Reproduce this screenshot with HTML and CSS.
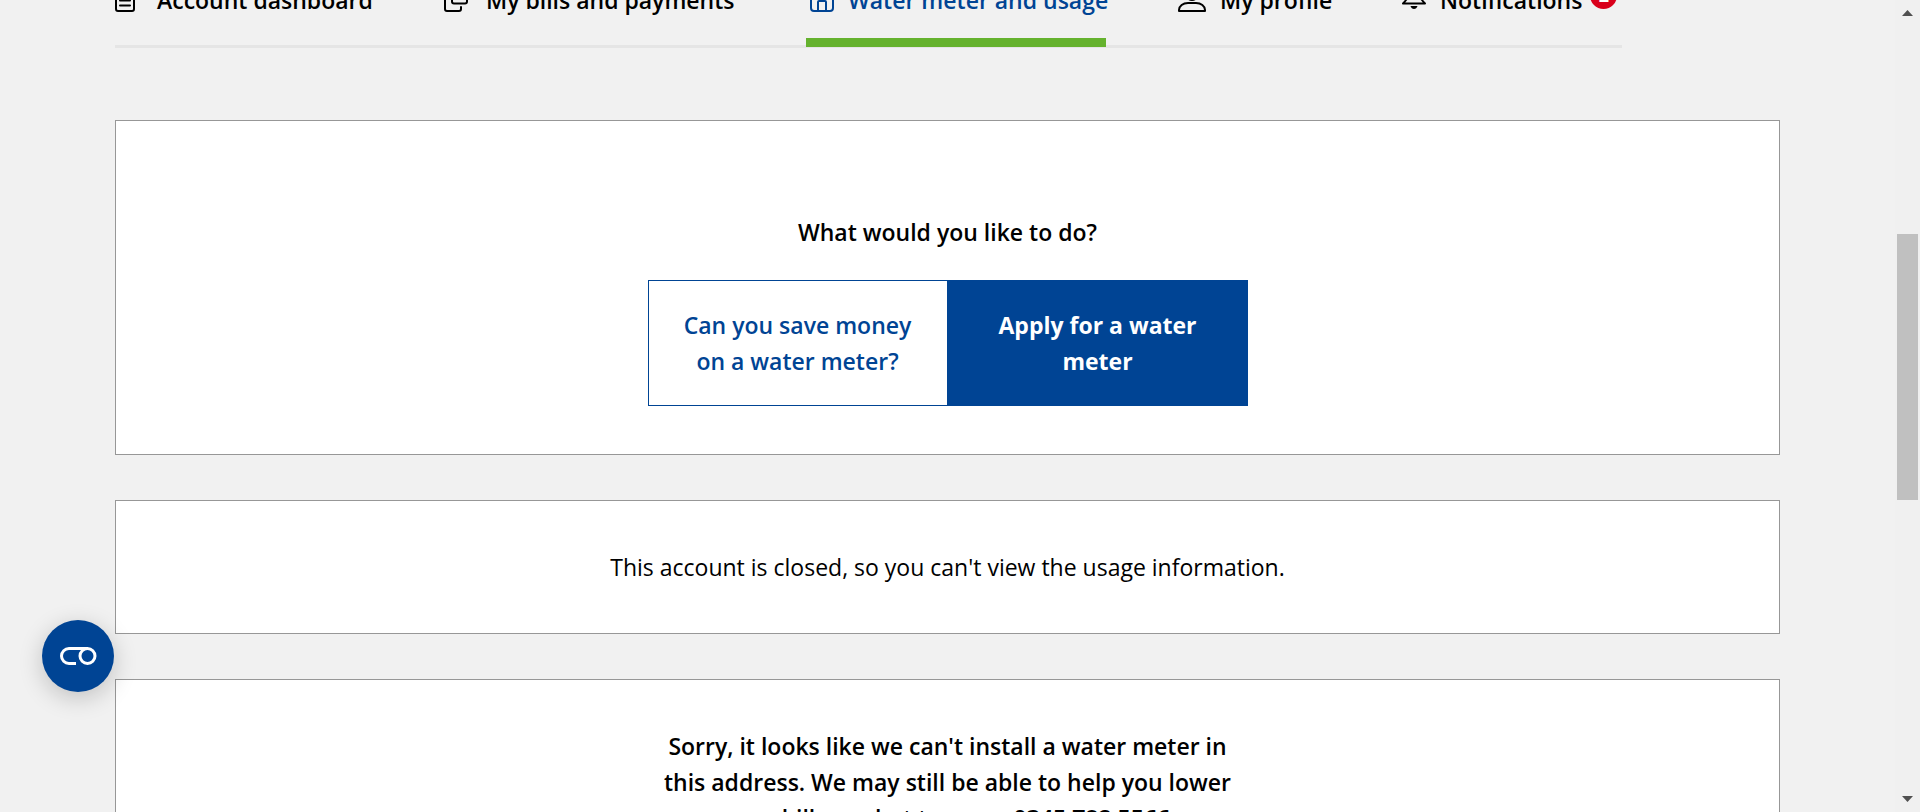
FILE: index.html
```html
<!DOCTYPE html>
<html lang="en">
<head>
<meta charset="utf-8">
<title>Water meter and usage</title>
<link rel="stylesheet" href="styles.css">
</head>
<body>
<div class="viewport">
  <div class="page">
    <nav class="tabs" aria-label="Account">
      <a class="tab" href="#">
        <svg class="icon" viewBox="0 0 28 24"><rect x="1" y="1" width="18" height="22" rx="2"/><path d="M5 7h10M5 12.5h10M5 17.500h10"/></svg>
        <span>Account dashboard</span>
      </a>
      <a class="tab" href="#">
        <svg class="icon" viewBox="0 0 28 24"><path d="M17 19v2a2 2 0 0 1-2 2H3a2 2 0 0 1-2-2V3a2 2 0 0 1 2-2h12a2 2 0 0 1 2 2v3"/><path d="M23 13.500a2 2 0 0 1-2 2H10a2 2 0 0 1-2-2V9a2 2 0 0 1 2-2h11a2 2 0 0 1 2 2z"/></svg>
        <span>My bills and payments</span>
      </a>
      <a class="tab tab-active" href="#" aria-current="page">
        <svg class="icon" viewBox="0 0 28 24"><path d="M5 10v10a3 3 0 0 0 3 3h16a3 3 0 0 0 3-3V10L16 1z"/><path d="M12 23v-9a1 1 0 0 1 1-1h6a1 1 0 0 1 1 1v9"/></svg>
        <span>Water meter and usage</span>
      </a>
      <a class="tab" href="#">
        <svg class="icon" viewBox="0 0 28 24"><circle cx="14" cy="6" r="6"/><path d="M1 23v-1c0-4 4-7 9-7h8c5 0 9 3 9 7v1z"/></svg>
        <span>My profile</span>
      </a>
      <a class="tab" href="#">
        <svg class="icon icon-bell" viewBox="0 0 24 24"><path d="M1 15.500h22c-3-3-4-4-4-8a7 7 0 0 0-14 0c0 4-1 5-4 8z"/><path class="solid" d="M8.500 18h7c-.5 2-2 3-3.500 3s-3-1-3.500-3z"/></svg>
        <span>Notifications</span>
        <span class="badge">2</span>
      </a>
    </nav>
    <main class="cards">
      <section class="card card-choice">
        <h2 class="question">What would you like to do?</h2>
        <div class="choices">
          <button class="choice" type="button">Can you save money on a water meter?</button>
          <button class="choice choice-selected" type="button">Apply for a water meter</button>
        </div>
      </section>
      <section class="card">
        <p class="message">This account is closed, so you can't view the usage information.</p>
      </section>
      <section class="card">
        <p class="notice">Sorry, it looks like we can't install a water meter in this address. We may still be able to help you lower your bills so chat to us on <strong>0345 782 5566</strong></p>
      </section>
    </main>
  </div>
  <div class="scrollbar" aria-hidden="true">
    <svg class="arrow" viewBox="0 0 11 6"><path d="M0 6L5.500 0L11 6z"/></svg>
    <div class="track"><div class="thumb"></div></div>
    <svg class="arrow" viewBox="0 0 11 6"><path d="M0 0h11L5.500 6z"/></svg>
  </div>
</div>
<button class="cookie" type="button" aria-label="Cookie settings">
  <svg class="cookie-icon" viewBox="0 0 37 18"><path d="M16 16.500H9a7.500 7.500 0 0 1 0-15h19"/><circle cx="27.500" cy="9" r="7.500"/></svg>
</button>
</body>
</html>
```
FILE: styles.css
```css
* {
  box-sizing: border-box;
}

body {
  margin: 0;
  background: #f1f1f1;
  color: #000;
  font-family: "Open Sans", "Noto Sans", sans-serif;
  font-size: 23px;
  line-height: 36px;
}

.viewport {
  display: flex;
  height: 100vh;
  overflow: hidden;
}

.page {
  flex: 1;
  min-width: 0;
  margin-top: -18px;
  padding: 0 115px;
}

/* Account tabs */
.tabs {
  display: grid;
  grid-template-columns: 257fr 290fr 300fr 152fr 220fr;
  column-gap: 72px;
  margin-right: 158px;
  border-bottom: 3px solid #e5e5e5;
}

.tab {
  display: flex;
  align-items: center;
  gap: 14px;
  min-width: 0;
  margin-bottom: -2px;
  padding-bottom: 20px;
  border-bottom: 9px solid transparent;
  color: #000;
  font-weight: 600;
  text-decoration: none;
  white-space: nowrap;
}

.tab-active {
  border-color: #65b22e;
  color: #004494;
}

.icon {
  flex: none;
  width: 28px;
  height: 24px;
  fill: none;
  stroke: currentColor;
  stroke-width: 2;
  stroke-linecap: round;
  stroke-linejoin: round;
}

.icon-bell {
  width: 24px;
}

.solid {
  fill: currentColor;
  stroke: none;
}

.badge {
  align-self: flex-start;
  flex: none;
  width: 27px;
  height: 27px;
  margin-left: -6px;
  border-radius: 50%;
  background: #d9001b;
  color: #fff;
  font-size: 18px;
  font-weight: 700;
  line-height: 27px;
  text-align: center;
}

/* Cards */
.cards {
  display: flex;
  flex-direction: column;
  gap: 45px;
  margin-top: 72px;
}

.card {
  padding: 48px 24px;
  border: 1px solid #979797;
  background: #fff;
  text-align: center;
}

.card-choice {
  padding-top: 93px;
}

.question {
  margin: 0 0 30px;
  font-size: 23px;
  font-weight: 600;
}

.choices {
  display: flex;
  max-width: 600px;
  margin: 0 auto;
}

.choice {
  flex: 1;
  padding: 26px 30px;
  border: 1px solid #004494;
  background: #fff;
  color: #004494;
  font: inherit;
  font-weight: 600;
}

.choice-selected {
  background: #004494;
  color: #fff;
  font-weight: 700;
}

.message {
  margin: 0;
}

.notice {
  max-width: 600px;
  margin: 0 auto;
  font-weight: 600;
}

.notice strong {
  font-weight: 700;
}

/* Scrollbar */
.scrollbar {
  display: flex;
  flex: none;
  flex-direction: column;
  align-items: center;
  width: 25px;
  padding: 10px 0;
  background: #f0f0f0;
}

.arrow {
  width: 11px;
  height: 6px;
  fill: #505050;
}

.track {
  flex: 1;
  width: 21px;
}

.thumb {
  height: 266px;
  margin-top: 218px;
  background: #c0c0c0;
}

/* Cookie settings */
.cookie {
  position: fixed;
  bottom: 120px;
  left: 42px;
  display: flex;
  align-items: center;
  justify-content: center;
  width: 72px;
  height: 72px;
  padding: 0;
  border: 0;
  border-radius: 50%;
  background: #004494;
  box-shadow: 0 6px 24px rgba(0, 0, 0, 0.2);
}

.cookie-icon {
  width: 37px;
  height: 18px;
  fill: none;
  stroke: #fff;
  stroke-width: 3;
}
```
